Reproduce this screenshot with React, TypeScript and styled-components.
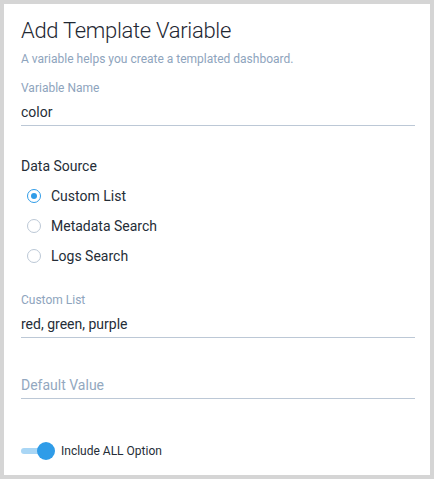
import React, { useState } from 'react';
import styled, { createGlobalStyle } from 'styled-components';

const GlobalStyle = createGlobalStyle`
  html, body {
    margin: 0;
    padding: 0;
    background: #d5d5d5;
  }
  body {
    font-family: Roboto, "Noto Sans", Arial, sans-serif;
  }
`;

const Frame = styled.div`
  width: 434px;
  height: 479px;
  padding: 4px;
  box-sizing: border-box;
`;

const Card = styled.div`
  width: 426px;
  height: 471px;
  background: #ffffff;
  box-sizing: border-box;
  padding: 13px 15px 0 17px;
  display: flex;
  flex-direction: column;
`;

const Title = styled.h1`
  margin: 0;
  font-family: "Roboto Light", Roboto, sans-serif;
  font-size: 22px;
  font-weight: 300;
  letter-spacing: -0.3px;
  line-height: 28px;
  color: #1f2833;
`;

const Subtitle = styled.p`
  margin: 6px 0 0;
  font-size: 12px;
  line-height: 16px;
  color: #8ea4bd;
`;

const Field = styled.div<{ $mt: number }>`
  margin-top: ${({ $mt }) => $mt}px;
  display: flex;
  flex-direction: column;
  border-bottom: 1px solid #bcc8d6;
`;

const FieldLabel = styled.label`
  font-size: 12px;
  line-height: 16px;
  color: #8ea4bd;
`;

const FieldValue = styled.div<{ $placeholder?: boolean }>`
  margin-top: 6px;
  font-size: 14px;
  line-height: 20px;
  padding-bottom: 3px;
  color: ${({ $placeholder }) => ($placeholder ? '#93a8c0' : '#252d37')};
`;

const SectionTitle = styled.div`
  margin-top: 30px;
  font-size: 14px;
  line-height: 20px;
  color: #252d37;
`;

const RadioList = styled.div`
  margin-top: 10px;
  padding-left: 6px;
  display: flex;
  flex-direction: column;
  gap: 10px;
`;

const RadioRow = styled.div`
  display: flex;
  align-items: center;
  gap: 10px;
  height: 20px;
  cursor: pointer;
`;

const RadioCircle = styled.span<{ $checked: boolean }>`
  width: 12px;
  height: 12px;
  border-radius: 50%;
  border: 1px solid ${({ $checked }) => ($checked ? '#2f9ce8' : '#bcc8d6')};
  display: flex;
  align-items: center;
  justify-content: center;
  box-sizing: content-box;

  &::after {
    content: '';
    width: 6px;
    height: 6px;
    border-radius: 50%;
    background: ${({ $checked }) => ($checked ? '#2f9ce8' : 'transparent')};
  }
`;

const RadioLabel = styled.span`
  font-size: 14px;
  color: #252d37;
`;

const ToggleRow = styled.div`
  margin-top: 42px;
  display: flex;
  align-items: center;
  gap: 6px;
  cursor: pointer;
`;

const Track = styled.div<{ $on: boolean }>`
  position: relative;
  width: 34px;
  height: 20px;
  display: flex;
  align-items: center;

  &::before {
    content: '';
    width: 28px;
    height: 6px;
    border-radius: 3px;
    background: ${({ $on }) => ($on ? '#a9d6f5' : '#d0d7e0')};
  }
`;

const Knob = styled.span<{ $on: boolean }>`
  position: absolute;
  top: 1px;
  left: ${({ $on }) => ($on ? '16px' : '0')};
  width: 18px;
  height: 18px;
  border-radius: 50%;
  background: ${({ $on }) => ($on ? '#2f9ce8' : '#f2f2f2')};
`;

const ToggleLabel = styled.span`
  font-size: 12px;
  color: #252d37;
`;

const sources = ['Custom List', 'Metadata Search', 'Logs Search'];

export default function App() {
  const [source, setSource] = useState('Custom List');
  const [includeAll, setIncludeAll] = useState(true);

  return (
    <>
      <GlobalStyle />
      <Frame>
        <Card>
          <Title>Add Template Variable</Title>
          <Subtitle>A variable helps you create a templated dashboard.</Subtitle>

          <Field $mt={13}>
            <FieldLabel>Variable Name</FieldLabel>
            <FieldValue>color</FieldValue>
          </Field>

          <SectionTitle>Data Source</SectionTitle>
          <RadioList>
            {sources.map((s) => (
              <RadioRow key={s} onClick={() => setSource(s)}>
                <RadioCircle $checked={source === s} />
                <RadioLabel>{s}</RadioLabel>
              </RadioRow>
            ))}
          </RadioList>

          <Field $mt={26}>
            <FieldLabel>Custom List</FieldLabel>
            <FieldValue>red, green, purple</FieldValue>
          </Field>

          <Field $mt={31}>
            <FieldValue $placeholder>Default Value</FieldValue>
          </Field>

          <ToggleRow onClick={() => setIncludeAll(!includeAll)}>
            <Track $on={includeAll}>
              <Knob $on={includeAll} />
            </Track>
            <ToggleLabel>Include ALL Option</ToggleLabel>
          </ToggleRow>
        </Card>
      </Frame>
    </>
  );
}
